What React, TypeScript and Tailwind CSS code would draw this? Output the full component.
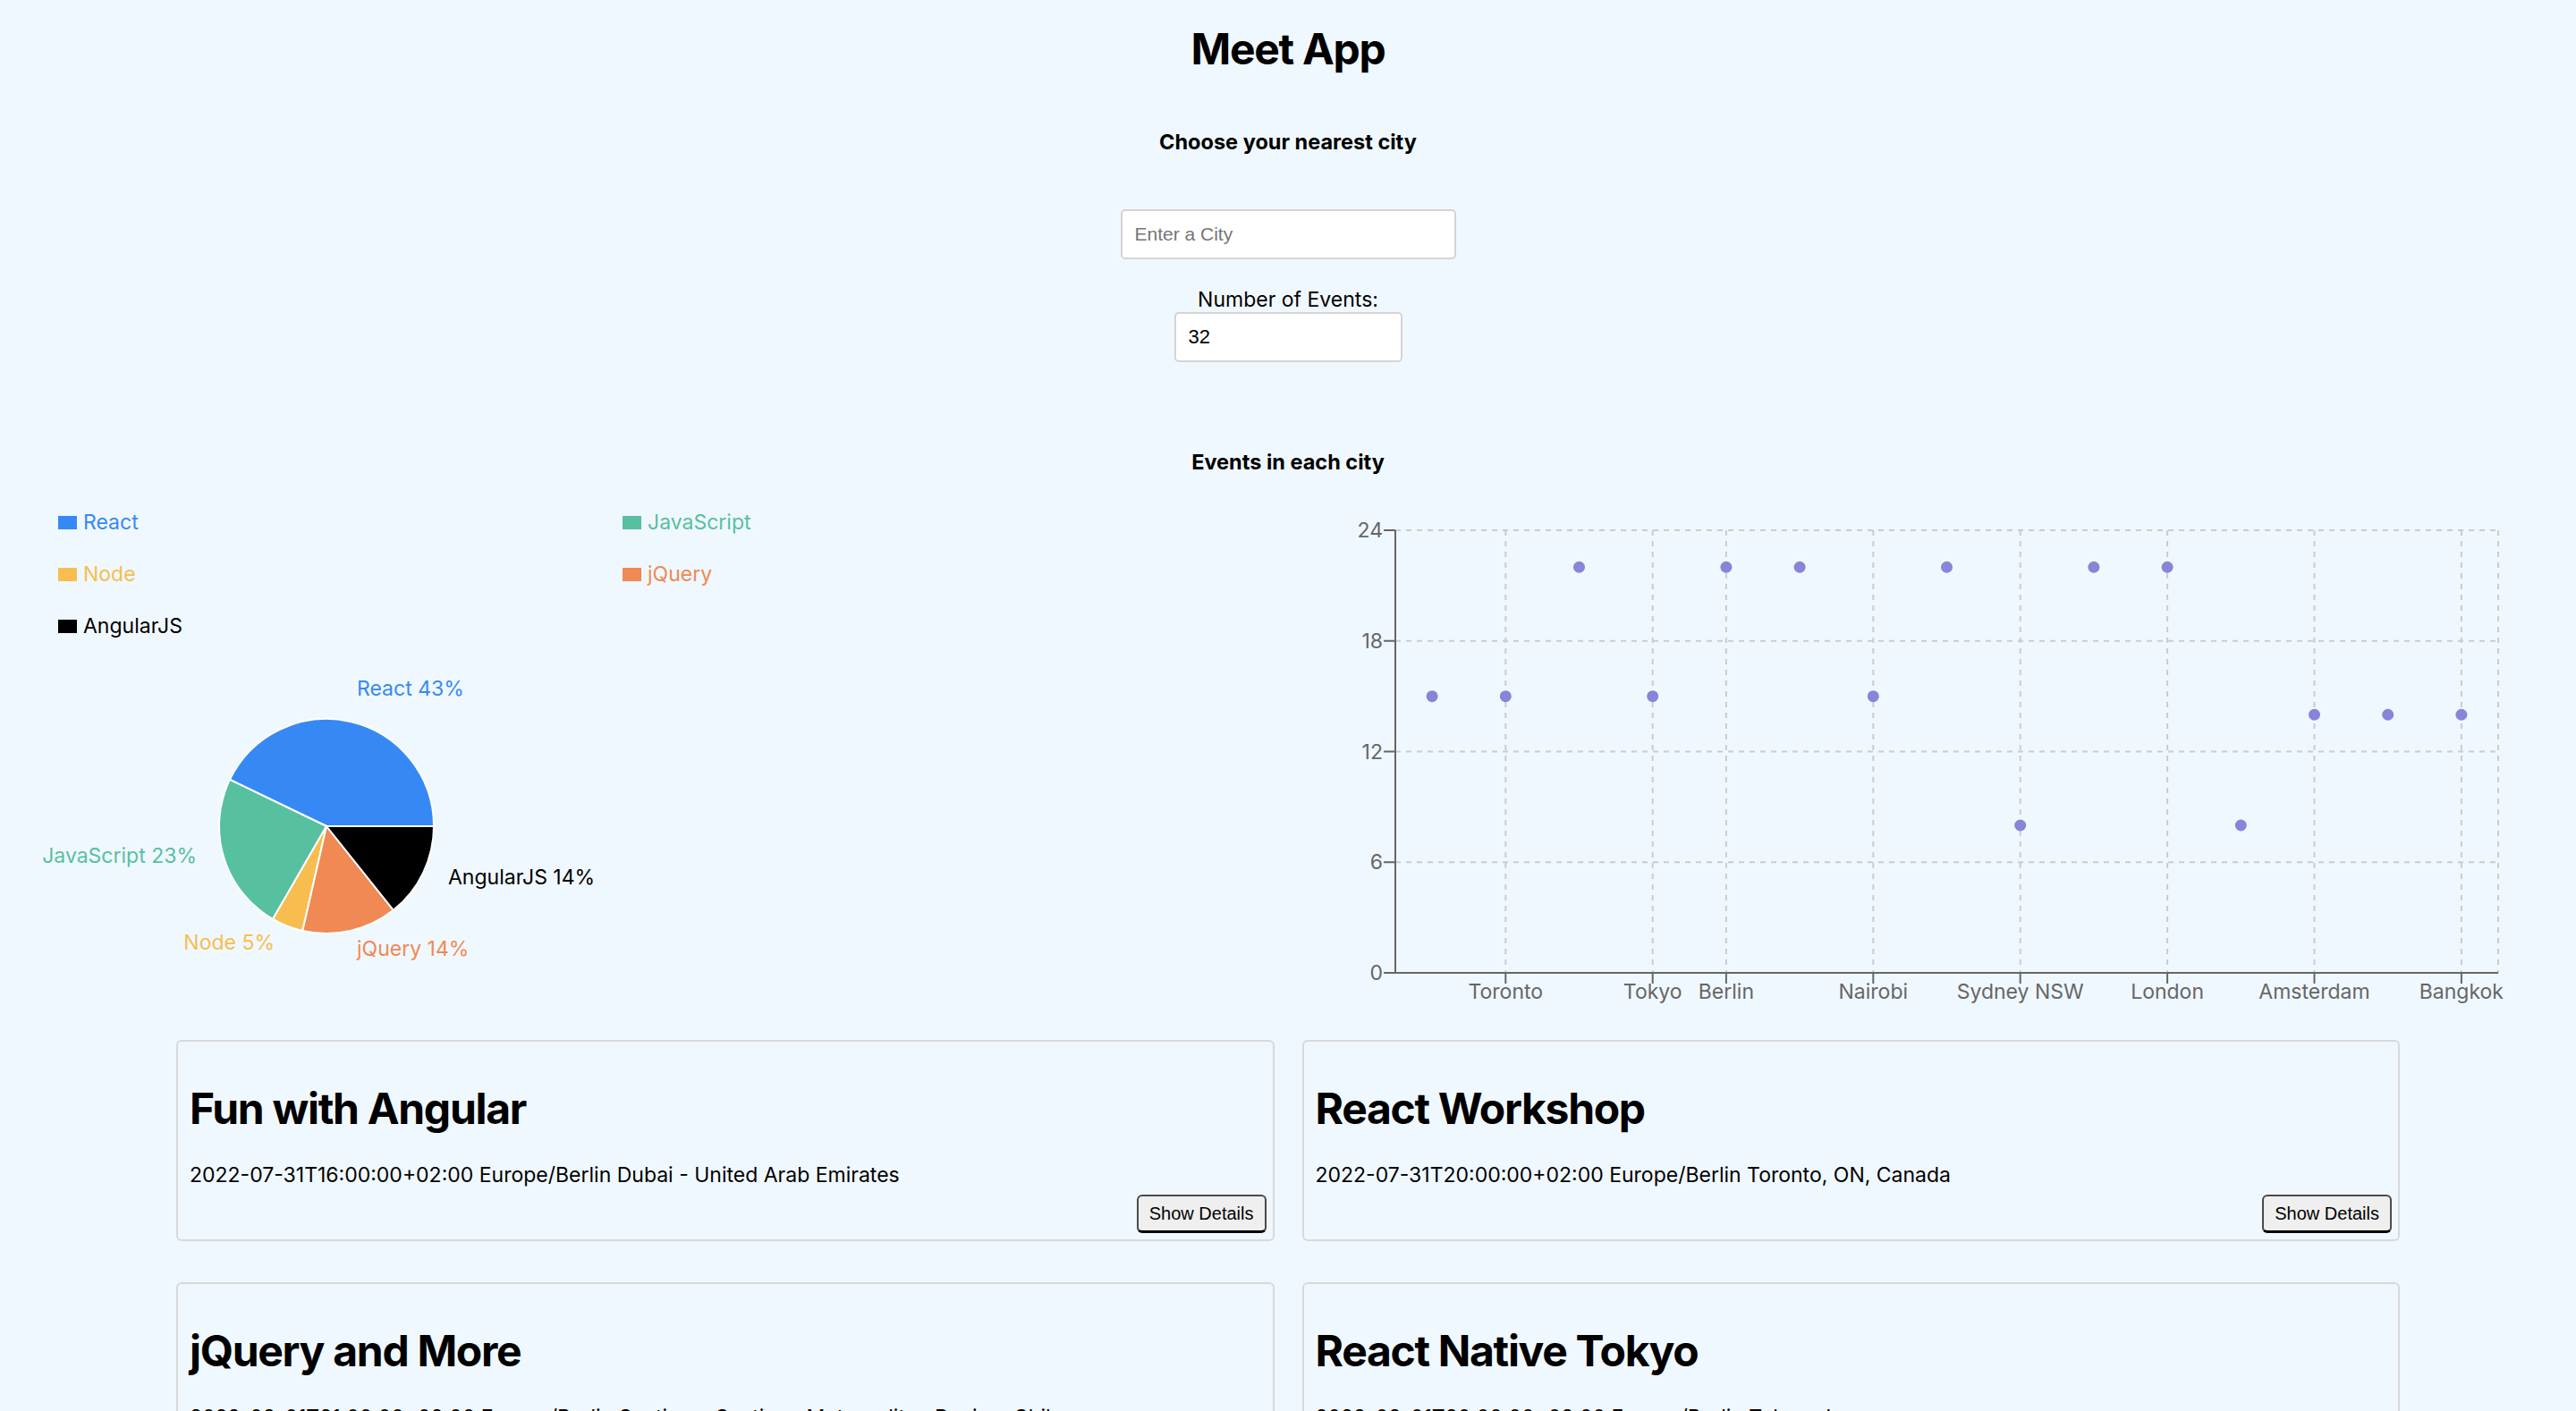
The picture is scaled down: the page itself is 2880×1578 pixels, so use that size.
import React from "react";

const pieData = [
  { name: "React", value: 9, color: "#3689F5", label: "React 43%", lx: 399, ly: 64, anchor: "start" },
  { name: "JavaScript", value: 5, color: "#57C0A0", label: "JavaScript 23%", lx: 220, ly: 251, anchor: "end" },
  { name: "Node", value: 1, color: "#F7BD4F", label: "Node 5%", lx: 307, ly: 348, anchor: "end" },
  { name: "jQuery", value: 3, color: "#F08953", label: "jQuery 14%", lx: 399, ly: 355, anchor: "start" },
  { name: "AngularJS", value: 3, color: "#000000", label: "AngularJS 14%", lx: 501, ly: 275, anchor: "start" },
];

const scatterVals = [15, 15, 22, 15, 22, 22, 15, 22, 8, 22, 22, 8, 14, 14, 14];
const xLabels: Record<number, string> = {
  1: "Toronto",
  3: "Tokyo",
  4: "Berlin",
  6: "Nairobi",
  8: "Sydney NSW",
  10: "London",
  12: "Amsterdam",
  14: "Bangkok",
};

const events = [
  {
    title: "Fun with Angular",
    details: "2022-07-31T16:00:00+02:00 Europe/Berlin Dubai - United Arab Emirates",
  },
  {
    title: "React Workshop",
    details: "2022-07-31T20:00:00+02:00 Europe/Berlin Toronto, ON, Canada",
  },
  {
    title: "jQuery and More",
    details: "2022-08-01T21:00:00+02:00 Europe/Berlin Santiago, Santiago Metropolitan Region, Chile",
  },
  {
    title: "React Native Tokyo",
    details: "2022-08-01T20:00:00+02:00 Europe/Berlin Tokyo, Japan",
  },
  {
    title: "Fun with Angular",
    details: "2022-08-02T16:00:00+02:00 Europe/Berlin Berlin, Germany",
  },
  {
    title: "React Workshop",
    details: "2022-08-02T20:00:00+02:00 Europe/Berlin London, UK",
  },
];

function PieChartView() {
  const cx = 365;
  const cy = 210;
  const r = 120;
  const total = pieData.reduce((s, d) => s + d.value, 0);
  let acc = 0;
  const pt = (deg: number) => {
    const rad = (deg * Math.PI) / 180;
    return [cx + r * Math.cos(rad), cy - r * Math.sin(rad)];
  };
  return (
    <svg width="720" height="449" className="block">
      {pieData.map((d) => {
        const a1 = (acc / total) * 360;
        acc += d.value;
        const a2 = (acc / total) * 360;
        const [x1, y1] = pt(a1);
        const [x2, y2] = pt(a2);
        const large = a2 - a1 > 180 ? 1 : 0;
        return (
          <path
            key={d.name}
            d={`M ${cx} ${cy} L ${x1} ${y1} A ${r} ${r} 0 ${large} 0 ${x2} ${y2} Z`}
            fill={d.color}
            stroke="#ffffff"
            strokeWidth={2}
          />
        );
      })}
      {pieData.map((d) => (
        <text
          key={d.label}
          x={d.lx}
          y={d.ly}
          fill={d.color}
          textAnchor={d.anchor as "start" | "end"}
          fontFamily="Inter, sans-serif"
          fontSize="23"
        >
          {d.label}
        </text>
      ))}
    </svg>
  );
}

function ScatterView() {
  const x0 = 120;
  const x1 = 1353;
  const yTop = 33;
  const yBot = 528;
  const band = (x1 - x0) / 15;
  const cxOf = (i: number) => x0 + (i + 0.5) * band;
  const yOf = (v: number) => yBot - (v * (yBot - yTop)) / 24;
  const yTicks = [0, 6, 12, 18, 24];
  const tickIdx = Object.keys(xLabels).map((k) => Number(k));
  return (
    <svg width="1440" height="603" className="block">
      {yTicks
        .filter((v) => v !== 0)
        .map((v) => (
          <line
            key={`h${v}`}
            x1={x0}
            x2={x1}
            y1={yOf(v)}
            y2={yOf(v)}
            stroke="#cccccc"
            strokeWidth={2}
            strokeDasharray="6 6"
          />
        ))}
      {tickIdx.map((i) => (
        <line
          key={`v${i}`}
          x1={cxOf(i)}
          x2={cxOf(i)}
          y1={yTop}
          y2={yBot}
          stroke="#cccccc"
          strokeWidth={2}
          strokeDasharray="6 6"
        />
      ))}
      <line x1={x1} x2={x1} y1={yTop} y2={yBot} stroke="#cccccc" strokeWidth={2} strokeDasharray="6 6" />
      <line x1={x0} x2={x0} y1={yTop} y2={yBot} stroke="#666666" strokeWidth={2} />
      <line x1={x0} x2={x1} y1={yBot} y2={yBot} stroke="#666666" strokeWidth={2} />
      {yTicks.map((v) => (
        <g key={`yt${v}`}>
          <line x1={x0 - 13} x2={x0} y1={yOf(v)} y2={yOf(v)} stroke="#666666" strokeWidth={2} />
          <text
            x={x0 - 14}
            y={yOf(v) + 8}
            textAnchor="end"
            fill="#666666"
            fontFamily="Inter, sans-serif"
            fontSize="23"
          >
            {v}
          </text>
        </g>
      ))}
      {tickIdx.map((i) => (
        <g key={`xt${i}`}>
          <line x1={cxOf(i)} x2={cxOf(i)} y1={yBot} y2={yBot + 12} stroke="#666666" strokeWidth={2} />
          <text
            x={cxOf(i)}
            y={557}
            textAnchor="middle"
            fill="#666666"
            fontFamily="Inter, sans-serif"
            fontSize="23"
          >
            {xLabels[i]}
          </text>
        </g>
      ))}
      {scatterVals.map((v, i) => (
        <circle key={`d${i}`} cx={cxOf(i)} cy={yOf(v)} r={6.5} fill="#8884d8" />
      ))}
    </svg>
  );
}

function EventCard({ title, details }: { title: string; details: string }) {
  return (
    <div className="flex h-[225px] flex-col rounded-[6px] border-2 border-[#d9d9d9] pb-[7px] pl-[13px] pr-[7px] pt-[46px]">
      <h2 className="text-[48px] font-bold leading-[58px] tracking-[-1.3px]">{title}</h2>
      <p className="mt-[32px] text-[23px] leading-[27px]">{details}</p>
      <button className="mt-[8px] h-[43px] self-end rounded-[6px] border-2 border-[#4a4a4a] border-b-[3px] border-b-black bg-[#efefef] px-[12px] font-['Liberation_Sans',Arial,sans-serif] text-[20px] leading-[24px] text-black">
        Show Details
      </button>
    </div>
  );
}

export default function App() {
  const legend = pieData;
  return (
    <div className="min-h-screen w-full bg-[#f0f8ff] font-['Inter',sans-serif] text-black">
      <div className="flex flex-col">
        <h1 className="mt-[26px] text-center text-[48px] font-bold leading-[58px] tracking-[-1.3px]">Meet App</h1>
        <h4 className="mt-[61px] text-center text-[23.5px] font-bold leading-[28px]">Choose your nearest city</h4>
        <div className="mt-[61px] flex justify-center">
          <input
            type="text"
            placeholder="Enter a City"
            className="h-[56px] w-[375px] rounded-[5px] border-2 border-[#d4d4d4] bg-white px-[14px] font-['Liberation_Sans',Arial,sans-serif] text-[21px] text-black placeholder:text-[#757575]"
          />
        </div>
        <label className="mt-[32px] text-center text-[23px] leading-[27px]">Number of Events:</label>
        <div className="flex justify-center">
          <input
            type="text"
            defaultValue="32"
            className="h-[56px] w-[255px] rounded-[5px] border-2 border-[#d4d4d4] bg-white px-[14px] font-['Liberation_Sans',Arial,sans-serif] text-[22px] text-black"
          />
        </div>
        <h4 className="mt-[98px] text-center text-[23.5px] font-bold leading-[28px]">Events in each city</h4>
        <div className="mt-[29px] flex h-[603px]">
          <div className="flex w-[1440px] flex-col">
            <div className="grid grid-cols-[631px_auto] gap-y-[31px] pl-[65px] pt-[11px]">
              {legend.map((d) => (
                <div key={d.name} className="flex items-center gap-[7px] text-[23px] leading-[27px]" style={{ color: d.color }}>
                  <span className="inline-block h-[15px] w-[21px]" style={{ backgroundColor: d.color }} />
                  <span>{d.name}</span>
                </div>
              ))}
            </div>
            <PieChartView />
          </div>
          <div className="w-[1440px]">
            <ScatterView />
          </div>
        </div>
        <div className="grid grid-cols-2 gap-x-[31px] gap-y-[46px] px-[197px] pb-[40px]">
          {events.map((e, i) => (
            <EventCard key={i} title={e.title} details={e.details} />
          ))}
        </div>
      </div>
    </div>
  );
}
